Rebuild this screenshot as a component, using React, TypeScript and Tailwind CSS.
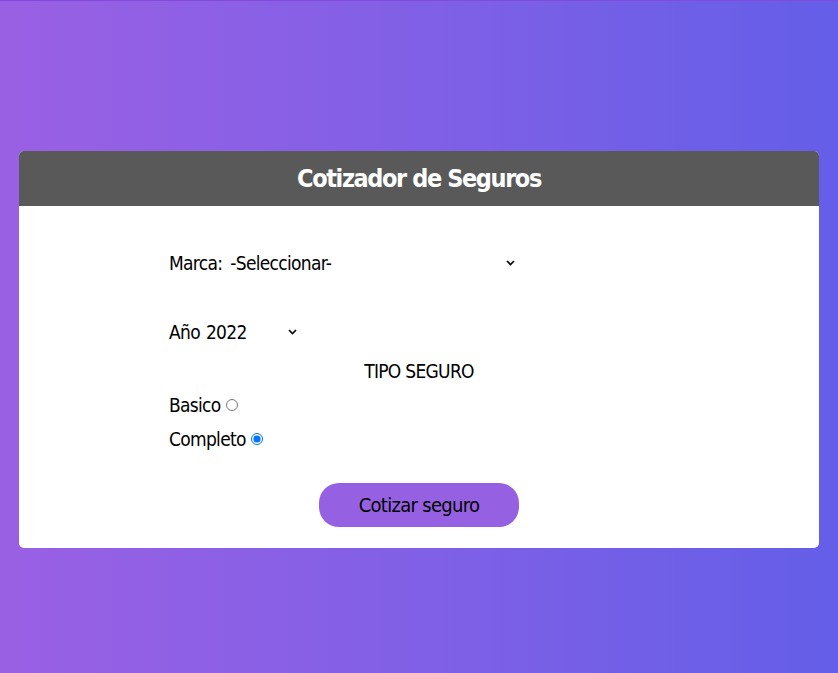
import { useState } from "react";

const Chevron = () => (
  <svg width="9" height="6" viewBox="0 0 9 6" className="shrink-0">
    <path d="M1 1l3.5 3.5L8 1" fill="none" stroke="#000" strokeWidth="1.6" />
  </svg>
);

const App = (): JSX.Element => {
  const [marca, setMarca] = useState<string>("");
  const [year, setYear] = useState<string>("2022");
  const [plan, setPlan] = useState<string>("completo");

  return (
    <div
      className="min-h-screen border-t border-[#8548dc] bg-gradient-to-r from-[#9a60e4] to-[#645ee8] pt-[150px]"
      style={{ fontFamily: '"Liberation Sans Narrow", "DejaVu Sans Condensed", "Liberation Sans", sans-serif' }}
    >
      <div className="ml-[19px] w-[800px] overflow-hidden rounded-[5px] bg-white">
        <div className="flex h-[55px] items-center justify-center bg-[#595959]">
          <h1 className="text-[25px] font-bold tracking-[-1.4px] text-white">Cotizador de Seguros</h1>
        </div>

        <form className="mx-auto flex w-[500px] flex-col pt-[42px] pb-[21px] text-[19px] tracking-[-0.7px] text-black">
          <div className="flex h-[30px] w-[351px] items-center">
            <label htmlFor="marca">Marca:</label>
            <div className="relative ml-[8px] flex flex-1 items-center">
              <select
                id="marca"
                value={marca}
                onChange={(e) => setMarca(e.target.value)}
                className="w-full appearance-none bg-white outline-none"
              >
                <option value="">-Seleccionar-</option>
                <option value="1">Americano</option>
                <option value="2">Europeo</option>
                <option value="3">Asiatico</option>
              </select>
              <span className="pointer-events-none absolute right-[5px]"><Chevron /></span>
            </div>
          </div>

          <div className="mt-[39px] flex h-[30px] w-[128px] items-center">
            <label htmlFor="year">Año</label>
            <div className="relative ml-[6px] flex flex-1 items-center">
              <select
                id="year"
                value={year}
                onChange={(e) => setYear(e.target.value)}
                className="w-full appearance-none bg-white outline-none"
              >
                {["2022", "2021", "2020", "2019", "2018"].map((y) => (
                  <option key={y} value={y}>{y}</option>
                ))}
              </select>
              <span className="pointer-events-none absolute right-[0px]"><Chevron /></span>
            </div>
          </div>

          <div className="mt-[7px] flex h-[34px] items-center justify-center">TIPO SEGURO</div>

          <label className="flex h-[34px] items-center gap-[5px]">
            <span>Basico</span>
            <input
              type="radio"
              name="plan"
              value="basico"
              checked={plan === "basico"}
              onChange={() => setPlan("basico")}
              className="h-[12px] w-[12px]"
            />
          </label>
          <label className="flex h-[34px] items-center gap-[5px]">
            <span>Completo</span>
            <input
              type="radio"
              name="plan"
              value="completo"
              checked={plan === "completo"}
              onChange={() => setPlan("completo")}
              className="h-[12px] w-[12px]"
            />
          </label>

          <button
            type="button"
            className="mx-auto mt-[27px] h-[44px] w-[200px] rounded-[20px] bg-[#9561e2] text-[20px] text-black"
          >
            Cotizar seguro
          </button>
        </form>
      </div>
    </div>
  );
};

export default App;
